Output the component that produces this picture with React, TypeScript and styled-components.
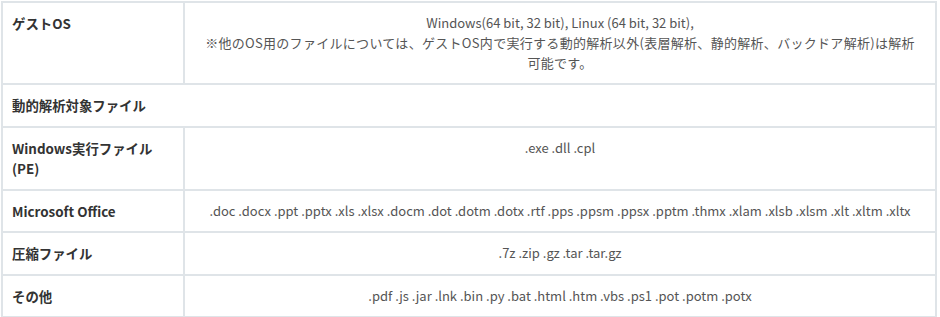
import React from "react";
import styled, { createGlobalStyle } from "styled-components";

const GlobalStyle = createGlobalStyle`
  body {
    margin: 0;
    background: #ffffff;
    font-family: "Noto Sans CJK JP", "Noto Sans", sans-serif;
  }
`;

const Wrapper = styled.div`
  padding: 1px 0 0 1px;
  width: 937px;
`;

const SpecTable = styled.table`
  width: 936px;
  border-collapse: collapse;
  table-layout: fixed;
  border: 2px solid #dfe4e8;
`;

const HeadCell = styled.th`
  width: 162px;
  padding: 10px 9px;
  border: 2px solid #dfe4e8;
  text-align: left;
  vertical-align: top;
  font-size: 13.4px;
  line-height: 20.5px;
  font-weight: 700;
  color: #333333;
`;

const ValueCell = styled.td`
  padding: 10px 9px;
  border: 2px solid #dfe4e8;
  text-align: center;
  vertical-align: top;
  font-size: 13px;
  line-height: 20px;
  color: #555555;
`;

const Note = styled.span`
  letter-spacing: 0.3px;
`;

type Row = {
  label: React.ReactNode;
  value?: React.ReactNode;
};

const rows: Row[] = [
  {
    label: "ゲストOS",
    value: (
      <>
        Windows(64 bit, 32 bit), Linux (64 bit, 32 bit),
        <br />
        <Note>
          ※他のOS用のファイルについては、ゲストOS内で実行する動的解析以外(表層解析、静的解析、バックドア解析)は解析
          <br />
          可能です。
        </Note>
      </>
    ),
  },
  { label: "動的解析対象ファイル" },
  {
    label: (
      <>
        Windows実行ファイル
        <br />
        (PE)
      </>
    ),
    value: ".exe .dll .cpl",
  },
  {
    label: "Microsoft Office",
    value:
      ".doc .docx .ppt .pptx .xls .xlsx .docm .dot .dotm .dotx .rtf .pps .ppsm .ppsx .pptm .thmx .xlam .xlsb .xlsm .xlt .xltm .xltx",
  },
  { label: "圧縮ファイル", value: ".7z .zip .gz .tar .tar.gz" },
  {
    label: "その他",
    value: ".pdf .js .jar .lnk .bin .py .bat .html .htm .vbs .ps1 .pot .potm .potx",
  },
];

export default function App() {
  return (
    <>
      <GlobalStyle />
      <Wrapper>
        <SpecTable>
          <tbody>
            {rows.map((row, i) => (
              <tr key={i}>
                {row.value === undefined ? (
                  <HeadCell colSpan={2}>{row.label}</HeadCell>
                ) : (
                  <>
                    <HeadCell>{row.label}</HeadCell>
                    <ValueCell>{row.value}</ValueCell>
                  </>
                )}
              </tr>
            ))}
          </tbody>
        </SpecTable>
      </Wrapper>
    </>
  );
}
